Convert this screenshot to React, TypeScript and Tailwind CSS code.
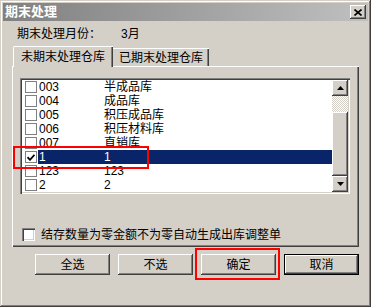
import React from "react";

const font = { fontFamily: '"Liberation Sans", "Noto Sans CJK SC", sans-serif' };

const rows: { code: string; name: string; checked?: boolean; sel?: boolean }[] = [
  { code: "003", name: "半成品库" },
  { code: "004", name: "成品库" },
  { code: "005", name: "积压成品库" },
  { code: "006", name: "积压材料库" },
  { code: "007", name: "直销库" },
  { code: "1", name: "1", checked: true, sel: true },
  { code: "123", name: "123" },
  { code: "2", name: "2" },
];

const raised =
  "shadow-[inset_-1px_-1px_#404040,inset_1px_1px_#ffffff,inset_-2px_-2px_#808080,inset_2px_2px_#d4d0c8]";

function Btn({ label, def }: { label: string; def?: boolean }) {
  return (
    <div
      className={`w-[75px] h-[21px] bg-[#d4d0c8] flex items-center justify-center text-[12px] leading-[14px] text-black ${
        def
          ? "border border-black shadow-[inset_-1px_-1px_#404040,inset_1px_1px_#ffffff,inset_-2px_-2px_#808080]"
          : raised
      }`}
    >
      {label}
    </div>
  );
}

function Arrow({ up }: { up?: boolean }) {
  return (
    <div className={`w-[16px] h-[16px] bg-[#d4d0c8] flex items-center justify-center ${raised}`}>
      <svg width="7" height="4" viewBox="0 0 7 4">
        {up ? <polygon points="3.5,0 7,4 0,4" fill="#000" /> : <polygon points="0,0 7,0 3.5,4" fill="#000" />}
      </svg>
    </div>
  );
}

export default function App() {
  return (
    <div style={font} className="w-[374px] h-[308px] bg-white">
      <div className="relative w-[371px] h-[307px] bg-[#d4d0c8] p-[3px] flex flex-col shadow-[inset_-1px_-1px_#404040,inset_1px_1px_#d4d0c8,inset_-2px_-2px_#808080,inset_2px_2px_#ffffff]">
        {/* title bar */}
        <div className="h-[18px] flex items-center justify-between bg-gradient-to-r from-[#808080] to-[#c0c0c0] pl-[2px] pr-[2px]">
          <span className="text-white font-bold text-[13px] leading-[18px]">期末处理</span>
          <div className={`w-[16px] h-[14px] bg-[#d4d0c8] flex items-center justify-center ${raised}`}>
            <svg width="8" height="7" viewBox="0 0 8 7">
              <path d="M0.5 0.5 L7.5 6.5 M7.5 0.5 L0.5 6.5" stroke="#000" strokeWidth="1.6" />
            </svg>
          </div>
        </div>

        {/* month row */}
        <div className="flex items-center h-[14px] mt-[6px] pl-[14px] text-[12px] leading-[14px] text-black">
          <span className="w-[104px]">期末处理月份：</span>
          <span>3月</span>
        </div>

        {/* tabs */}
        <div className="flex items-end h-[20px] mt-[5px] pl-[10px] relative z-10">
          <div className="h-[21px] -mb-[1px] w-[100px] bg-[#d4d0c8] border-t border-l border-white shadow-[inset_-1px_0_#404040,inset_-2px_0_#808080] rounded-tl-[2px] flex items-center pl-[7px] text-[12px] leading-[14px] text-black">
            未期末处理仓库
          </div>
          <div className="h-[18px] w-[96px] bg-[#d4d0c8] border-t border-white shadow-[inset_-1px_0_#404040,inset_-2px_0_#808080] flex items-center pl-[6px] text-[12px] leading-[14px] text-black">
            已期末处理仓库
          </div>
        </div>

        {/* panel */}
        <div className="ml-[9px] w-[347px] h-[181px] border-t border-l border-white shadow-[inset_-1px_-1px_#404040,inset_-2px_-2px_#808080] pt-[11px] pl-[7px] flex flex-col">
          {/* list box */}
          <div className="w-[330px] h-[116px] bg-white p-[2px] shadow-[inset_1px_1px_#808080,inset_2px_2px_#404040,inset_-1px_-1px_#ffffff,inset_-2px_-2px_#d4d0c8] flex">
            <div className="flex-1 flex flex-col overflow-hidden">
              {rows.map((r) => (
                <div key={r.code} className="h-[14px] flex items-center shrink-0 text-[12px] leading-[14px]">
                  <div className="w-[16px] h-[14px] flex items-center justify-end pr-[1px] bg-white shrink-0">
                    <div className="w-[12px] h-[12px] border border-[#808080] bg-white flex items-center justify-center">
                      {r.checked && (
                        <svg width="8" height="7" viewBox="0 0 8 7">
                          <path d="M0.5 3.2 L3 5.8 L7.5 0.8" stroke="#000" strokeWidth="1.8" fill="none" />
                        </svg>
                      )}
                    </div>
                  </div>
                  <div
                    className={`flex-1 h-[14px] flex items-center ${
                      r.sel ? "bg-[#0a246a] text-white" : "text-black"
                    }`}
                  >
                    <span className="w-[66px] pl-[1px]">{r.code}</span>
                    <span>{r.name}</span>
                  </div>
                </div>
              ))}
            </div>
            {/* scrollbar */}
            <div className="w-[16px] flex flex-col">
              <Arrow up />
              <div className="h-[16px] bg-[repeating-conic-gradient(#ffffff_0_25%,#d4d0c8_0_50%)] bg-[length:2px_2px]" />
              <div className={`flex-1 bg-[#d4d0c8] ${raised}`} />
              <Arrow />
            </div>
          </div>

          {/* checkbox row */}
          <div className="flex items-center h-[13px] mt-[34px] pl-[2px] text-[12px] leading-[14px] text-black">
            <div className="w-[13px] h-[13px] bg-white shadow-[inset_1px_1px_#808080,inset_2px_2px_#404040,inset_-1px_-1px_#ffffff,inset_-2px_-2px_#d4d0c8]" />
            <span className="ml-[6px]">结存数量为零金额不为零自动生成出库调整单</span>
          </div>
        </div>

        {/* buttons */}
        <div className="flex gap-[8px] pl-[32px] mt-[7px]">
          <Btn label="全选" />
          <Btn label="不选" />
          <Btn label="确定" />
          <Btn label="取消" def />
        </div>

        {/* red highlight overlays */}
        <div className="absolute left-[13px] top-[146px] w-[136px] h-[23px] border-2 border-[#ff0000] pointer-events-none" />
        <div className="absolute left-[195px] top-[248px] w-[85px] h-[32px] border-2 border-[#ff0000] pointer-events-none" />
      </div>
    </div>
  );
}
